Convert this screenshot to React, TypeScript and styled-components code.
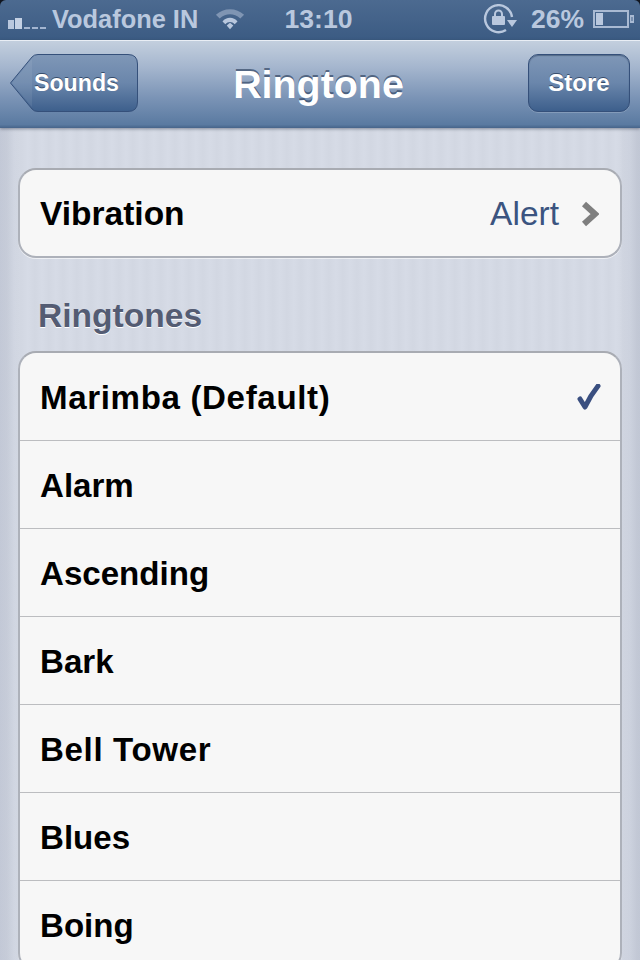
import styled, { createGlobalStyle } from "styled-components";

const GlobalStyle = createGlobalStyle`
  html, body {
    margin: 0;
    padding: 0;
    background: #d3d8e3;
  }
  body {
    font-family: "Liberation Sans", Arial, sans-serif;
  }
`;

const Screen = styled.div`
  width: 640px;
  height: 960px;
  overflow: hidden;
  display: flex;
  flex-direction: column;
  background: #10151f;
`;

const StatusBar = styled.div`
  height: 40px;
  flex: none;
  box-sizing: border-box;
  display: grid;
  grid-template-columns: 1fr auto 1fr;
  align-items: center;
  padding: 0 6px 2px 8px;
  color: #b9c8de;
  background: linear-gradient(#4c6a90, #3b5b83);
  border-radius: 6px 6px 0 0;
  font-weight: bold;
`;

const StatusLeft = styled.div`
  display: flex;
  align-items: center;
  font-size: 25.4px;
`;

const Carrier = styled.span`
  margin-left: 6px;
`;

const Clock = styled.div`
  font-size: 26.6px;
  margin-left: -5px;
`;

const StatusRight = styled.div`
  display: flex;
  align-items: center;
  justify-content: flex-end;
  font-size: 26.5px;
`;

const Percent = styled.span`
  margin: 0 9px 0 14px;
`;

const SignalSvg = styled.svg`
  margin-top: 9px;
`;

const WifiSvg = styled.svg`
  margin-left: 17px;
`;

const NavBar = styled.div`
  height: 88px;
  box-sizing: border-box;
  flex: none;
  display: flex;
  align-items: center;
  justify-content: space-between;
  padding: 0 10px;
  position: relative;
  background: linear-gradient(#c3cfde 0%, #a5b6ce 30%, #7b94b6 65%, #5a7aa1 96%, #46648a 100%);
  border-top: 1px solid #e9eef5;
  box-shadow: 0 1px 3px rgba(50, 60, 80, 0.5);
`;

const Title = styled.div`
  position: absolute;
  left: 0;
  right: 0;
  text-align: center;
  font-size: 39.4px;
  font-weight: bold;
  color: #fff;
  padding: 0 3px 1px 0;
  text-shadow: 0 -2px 0 rgba(50, 70, 100, 0.7);
`;

const BarButton = styled.div`
  height: 58px;
  margin-top: -3px;
  width: 102px;
  box-sizing: border-box;
  display: flex;
  align-items: center;
  justify-content: center;
  padding-bottom: 1px;
  color: #fff;
  font-size: 24px;
  font-weight: bold;
  border-radius: 10px;
  border: 1px solid #35507a;
  background: linear-gradient(#7f97b7, #6a86ab 50%, #3d5f8c);
  box-shadow: inset 0 1px 1px rgba(40, 60, 90, 0.5), 0 1px 0 rgba(255, 255, 255, 0.18);
  text-shadow: 0 -1px 0 rgba(40, 60, 90, 0.8);
`;

const BackWrap = styled.div`
  width: 128px;
  height: 58px;
  margin-top: -3px;
  position: relative;
  display: flex;
  align-items: center;
  justify-content: center;
  padding-left: 16px;
  box-sizing: border-box;
  color: #fff;
  font-size: 23.2px;
  font-weight: bold;
  text-shadow: 0 -1px 0 rgba(40, 60, 90, 0.8);
`;

const BackShape = styled.svg`
  position: absolute;
  left: 0;
  top: 0;
`;

const BackLabel = styled.span`
  position: relative;
  margin-left: -11px;
`;

const Content = styled.div`
  flex: 1;
  padding: 40px 18px 0;
  background:
    linear-gradient(90deg, rgba(150, 158, 178, 0.3), rgba(150, 158, 178, 0) 20px, rgba(150, 158, 178, 0) 620px, rgba(150, 158, 178, 0.3)),
    repeating-linear-gradient(90deg, #d6dbe6 0, #d2d7e2 7px, #d6dbe6 14px);
`;

const Card = styled.div`
  background: #f7f7f7;
  border: 2px solid #adb1ba;
  border-top-color: #a8abb2;
  border-radius: 18px;
  box-shadow: 0 1px 0 rgba(255, 255, 255, 0.6);
`;

const Row = styled.div<{ $last?: boolean; $spaced?: boolean }>`
  height: 88px;
  box-sizing: border-box;
  display: flex;
  align-items: center;
  justify-content: space-between;
  padding: 2px 19px 0 20px;
  color: #000;
  font-size: 33.1px;
  letter-spacing: ${(p) => (p.$spaced ? "0.65px" : "0")};
  font-weight: bold;
  border-bottom: ${(p) => (p.$last ? "none" : "1px solid #bcbdc0")};
`;

const VibrationRow = styled(Row)`
  height: 86px;
  padding: 2px 21px 0 20px;
  font-size: 33.5px;
`;

const RowValue = styled.div`
  display: flex;
  align-items: center;
  color: #3b5480;
  font-size: 33.5px;
  font-weight: normal;
  gap: 22px;
`;

const SectionTitle = styled.div`
  margin: 39px 0 16px 20px;
  font-size: 33.6px;
  line-height: 38px;
  font-weight: bold;
  color: #545c73;
  text-shadow: 0 1px 0 #fff;
`;

const SignalIcon = () => (
  <SignalSvg width="38" height="11" viewBox="0 0 38 11">
    <rect x="0" y="2" width="6" height="9" fill="#b9c8de" />
    <rect x="7" y="0" width="7" height="11" fill="#c4d1e4" />
    <rect x="16" y="9" width="6" height="2" fill="#a3b5d0" />
    <rect x="24" y="9" width="6" height="2" fill="#a3b5d0" />
    <rect x="32" y="9" width="6" height="2" fill="#a3b5d0" />
  </SignalSvg>
);

const WifiIcon = () => (
  <WifiSvg width="30" height="23" viewBox="0 0 32 24">
    <path d="M1 7 C9 -1 23 -1 31 7 L27 11 C20 5 12 5 5 11 Z" fill="#7f95b3" />
    <path d="M8 14 C12 9 20 9 24 14 L21 17 C18 14 14 14 11 17 Z" fill="#b9c8de" />
    <path d="M12.5 18.5 L16 15.5 L19.5 18.5 L16 22.5 Z" fill="#b9c8de" />
  </WifiSvg>
);

const RotationLockIcon = () => (
  <svg width="34" height="30" viewBox="0 0 34 30">
    <path d="M23 26 A13.5 13.5 0 1 1 29 13" fill="none" stroke="#b9c8de" strokeWidth="2.4" />
    <path d="M24 16 L34 16 L29 23 Z" fill="#b9c8de" />
    <rect x="9" y="12" width="13" height="9" rx="1" fill="#b9c8de" />
    <path d="M12 12 V10 A3.5 3.5 0 0 1 19 10 V12" fill="none" stroke="#b9c8de" strokeWidth="2" />
  </svg>
);

const BatteryIcon = () => (
  <svg width="41" height="18" viewBox="0 0 41 18">
    <rect x="1" y="1" width="34" height="16" fill="none" stroke="#a9bad3" strokeWidth="2" />
    <rect x="3" y="3" width="7" height="12" fill="#b9c8de" />
    <path d="M37 5 H41 V13 H37 Z M38.5 7 V11 H39.5 V7 Z" fill="#a9bad3" fillRule="evenodd" />
  </svg>
);

const BackOutline = () => (
  <BackShape width="128" height="58" viewBox="0 0 128 58">
    <defs>
      <linearGradient id="backFill" x1="0" y1="0" x2="0" y2="1">
        <stop offset="0" stopColor="#7f97b7" />
        <stop offset="0.5" stopColor="#6a86ab" />
        <stop offset="1" stopColor="#3d5f8c" />
      </linearGradient>
    </defs>
    <path
      d="M0.5 29 L22 3 Q24 0.5 28 0.5 H118 Q127.5 0.5 127.5 10 V48 Q127.5 57.5 118 57.5 H28 Q24 57.5 22 55 Z"
      fill="url(#backFill)"
      stroke="#35507a"
    />
    <path d="M2 29 L22 5 V53 Z" fill="#fff" opacity="0.07" />
  </BackShape>
);

const Chevron = () => (
  <svg width="18" height="26" viewBox="0 0 18 26">
    <path d="M3 3 L14 13 L3 23" fill="none" stroke="#7f7f7f" strokeWidth="6" />
  </svg>
);

const Check = () => (
  <svg width="26" height="28" viewBox="0 0 26 28">
    <path d="M5 15 L10 23 Q15 12 23 2" fill="none" stroke="#3a4f80" strokeWidth="5" strokeLinejoin="round" strokeLinecap="round" />
  </svg>
);

const ringtones = ["Marimba (Default)", "Alarm", "Ascending", "Bark", "Bell Tower", "Blues", "Boing"];

export default function App() {
  return (
    <Screen>
      <GlobalStyle />
      <StatusBar>
        <StatusLeft>
          <SignalIcon />
          <Carrier>Vodafone IN</Carrier>
          <WifiIcon />
        </StatusLeft>
        <Clock>13:10</Clock>
        <StatusRight>
          <RotationLockIcon />
          <Percent>26%</Percent>
          <BatteryIcon />
        </StatusRight>
      </StatusBar>
      <NavBar>
        <Title>Ringtone</Title>
        <BackWrap>
          <BackOutline />
          <BackLabel>Sounds</BackLabel>
        </BackWrap>
        <BarButton>Store</BarButton>
      </NavBar>
      <Content>
        <Card>
          <VibrationRow $last>
            Vibration
            <RowValue>
              Alert
              <Chevron />
            </RowValue>
          </VibrationRow>
        </Card>
        <SectionTitle>Ringtones</SectionTitle>
        <Card>
          {ringtones.map((name, i) => (
            <Row key={name} $spaced={name.includes(" ")}>
              {name}
              {i === 0 ? <Check /> : null}
            </Row>
          ))}
        </Card>
      </Content>
    </Screen>
  );
}
